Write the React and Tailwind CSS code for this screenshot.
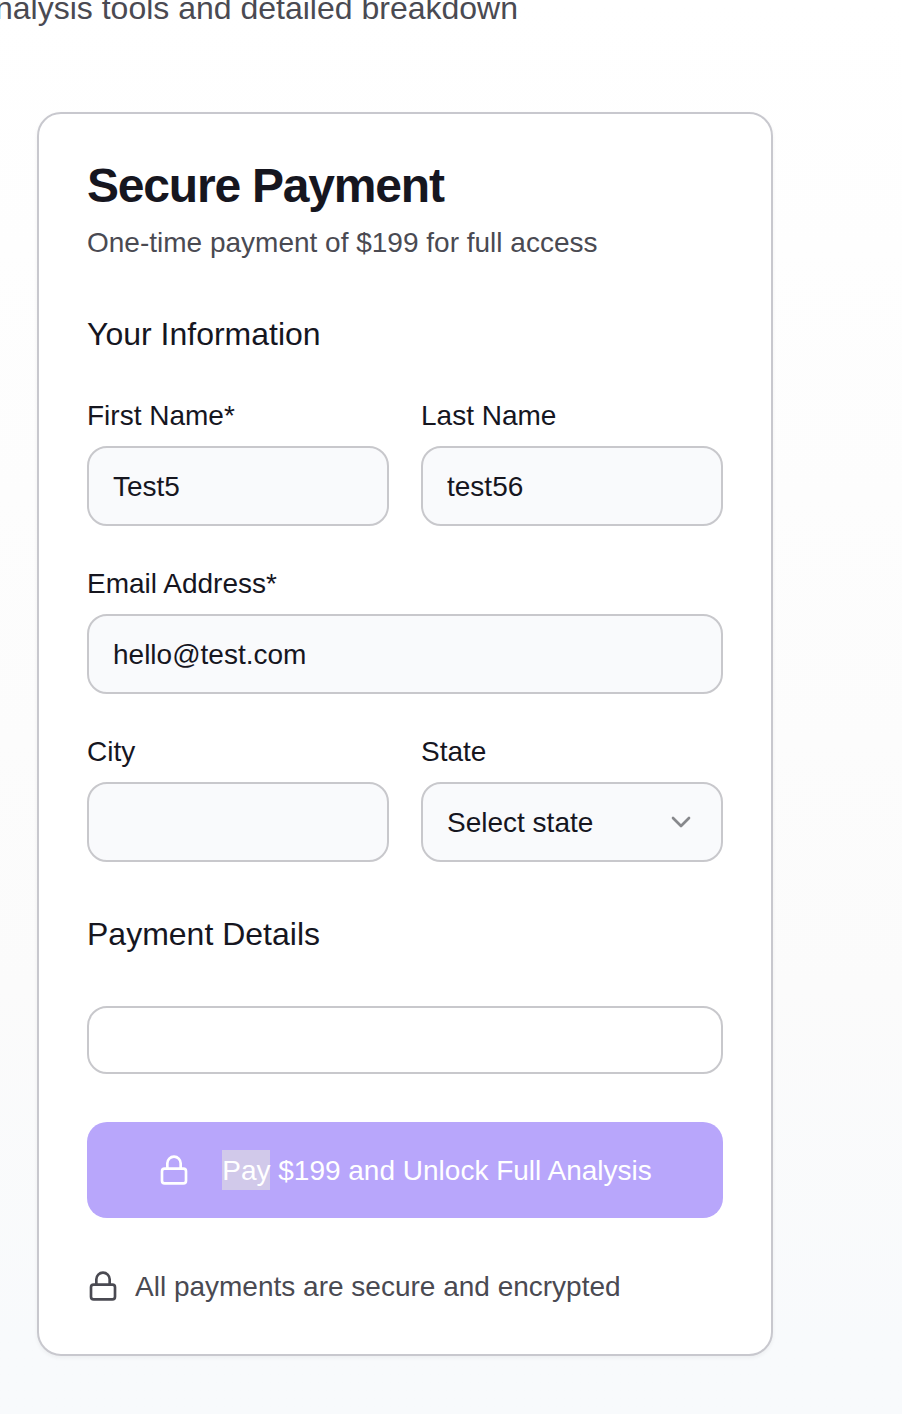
import { ChevronDown, Lock } from "lucide-react";

const control =
  "block h-20 w-full rounded-[20px] border-2 border-[#c8c8cc] bg-[#f9fafc] pl-6 pr-6 pt-0.5 text-[28px] leading-10 text-[#16161f] outline-none";

function Field({ label, children }) {
  return (
    <label className="flex min-w-0 flex-col gap-4">
      <span className="whitespace-nowrap text-[28px] leading-7">{label}</span>
      {children}
    </label>
  );
}

export default function App() {
  return (
    <main className="h-[1414px] w-[902px] overflow-hidden bg-linear-to-b from-white via-[#fbfbfb] via-70% to-[#f8fafc] to-95% font-['Liberation_Sans',Arial,sans-serif] text-[#16161f]">
      <div className="flex h-28 w-[518px] justify-end overflow-hidden">
        <p className="-mt-4 shrink-0 whitespace-nowrap text-[32px] leading-[48px] text-[#4a4a52]">
          nalysis tools and detailed breakdown
        </p>
      </div>

      <section className="ml-[37px] h-[1244px] w-[736px] rounded-3xl border-2 border-[#c8c8ce] bg-white p-12 shadow-[0_2px_4px_rgba(0,0,0,0.05)]">
        <h1 className="whitespace-nowrap text-[48px] font-bold leading-[48px] tracking-[-1.2px]">
          Secure Payment
        </h1>
        <p className="mt-3 whitespace-nowrap text-[28px] leading-[42px] text-[#4a4a52]">
          One-time payment of $199 for full access
        </p>

        <h2 className="mt-[46px] text-[32px] leading-[48px]">Your Information</h2>
        <div className="mt-11 grid grid-cols-2 gap-x-8 gap-y-11">
          <Field label="First Name*">
            <input className={control} defaultValue="Test5" />
          </Field>
          <Field label="Last Name">
            <input className={control} defaultValue="test56" />
          </Field>
          <div className="col-span-2">
            <Field label="Email Address*">
              <input className={control} defaultValue="hello@test.com" />
            </Field>
          </div>
          <Field label="City">
            <input className={control} />
          </Field>
          <div className="flex min-w-0 flex-col gap-4">
            <span className="text-[28px] leading-7">State</span>
            <button className="flex h-20 w-full items-center justify-between rounded-[20px] border-2 border-[#c8c8cc] bg-[#f9fafc] px-6 text-[28px] leading-10">
              <span className="pt-0.5">Select state</span>
              <ChevronDown size={32} strokeWidth={2} className="text-[#87888c]" />
            </button>
          </div>
        </div>

        <h2 className="mt-12 text-[32px] leading-[48px]">Payment Details</h2>
        <div className="mt-12 h-[68px] rounded-[20px] border-2 border-[#c8c8cc] bg-white" />

        <button className="mt-12 flex h-24 w-full items-center justify-center gap-8 rounded-[20px] bg-[#b8a6fb] text-[28px] text-white">
          <Lock size={32} strokeWidth={2} className="shrink-0" />
          <span className="flex h-10 whitespace-pre leading-[42px]">
            <span className="h-10 bg-[#d1c9ea]">Pay</span>
            <span> $199 and Unlock Full Analysis</span>
          </span>
        </button>

        <div className="mt-12 flex h-10 items-center gap-4 text-[28px] leading-10 text-[#4a4a52]">
          <Lock size={32} strokeWidth={2} className="shrink-0" />
          <span className="whitespace-nowrap pt-0.5">All payments are secure and encrypted</span>
        </div>
      </section>
    </main>
  );
}
